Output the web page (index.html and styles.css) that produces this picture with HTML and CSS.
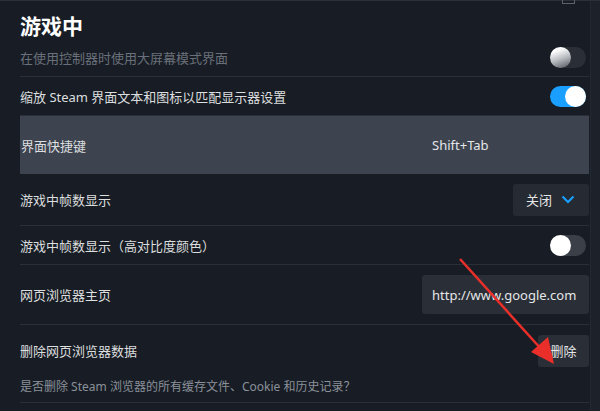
FILE: index.html
```html
<!DOCTYPE html>
<html>
<head>
    <meta charset="UTF-8">
    <title>游戏中</title>
    <link rel="stylesheet" href="styles.css">
</head>
<body>

<div id="frame">
    <div id="panel">
        <h1>游戏中</h1>

        <div class="row">
            <span class="label dim">在使用控制器时使用大屏幕模式界面</span>
            <div class="toggle disabled"><div class="knob"></div></div>
        </div>

        <div class="row">
            <span class="label">缩放 Steam 界面文本和图标以匹配显示器设置</span>
            <div class="toggle on"><div class="knob"></div></div>
        </div>

        <div class="row hotkey">
            <span class="label">界面快捷键</span>
            <div class="value">Shift+Tab</div>
        </div>

        <div class="row select">
            <span class="label">游戏中帧数显示</span>
            <div class="dropdown">
                关闭
                <svg width="14" height="9" viewBox="0 0 14 9"><path d="M1.5 1.5 L7 7 L12.5 1.5" fill="none" stroke="#1a9fff" stroke-width="2.2"/></svg>
            </div>
        </div>

        <div class="row">
            <span class="label">游戏中帧数显示（高对比度颜色）</span>
            <div class="toggle"><div class="knob"></div></div>
        </div>

        <div class="row text">
            <span class="label">网页浏览器主页</span>
            <div class="value input">http://www.google.com</div>
        </div>

        <div class="row block">
            <div class="line">
                <span class="label">删除网页浏览器数据</span>
                <div class="button">删除</div>
            </div>
            <div class="desc">是否删除 Steam 浏览器的所有缓存文件、Cookie 和历史记录？</div>
        </div>
    </div>
    <div id="scrollbar"></div>

    <!-- window controls cut off at the top edge -->
    <div id="winbox"></div>

    <!-- annotation arrow from the screenshot -->
    <svg id="arrow" width="600" height="411" viewBox="0 0 600 411">
        <line x1="460" y1="259" x2="542" y2="350" stroke="#ea2f2a" stroke-width="2.5"/>
        <polygon points="554,364 531,352 548,337" fill="#ea2f2a"/>
    </svg>
</div>

</body>
</html>
```

FILE: styles.css
```css
html {
    box-sizing: border-box;
}
*, *:before, *:after {
    box-sizing: inherit;
}

body{
    margin: 0;
    background-color: #181d25;
    font-family: "Noto Sans", "Noto Sans CJK SC", sans-serif;
    color: #dcdedf;
    overflow: hidden;
}

#frame{
    position: relative;
    width: 600px;
    height: 411px;
    display: flex;
    border-top: 1px solid #2b3039;
}

#panel{
    width: 590px;
    padding: 0 1px 0 20px;
}

#scrollbar{
    width: 10px;
    background-color: #1d222a;
    border-left: 1px solid #232831;
}

#winbox{
    position: absolute;
    left: 562px;
    top: -4px;
    width: 13px;
    height: 7px;
    border: 1px solid #5b616a;
}

h1{
    margin: 13px 0 0 0;
    font-size: 21px;
    line-height: 24px;
    font-weight: bold;
    color: #ffffff;
}

.row{
    display: flex;
    align-items: center;
    justify-content: space-between;
    height: 39px;
    border-bottom: 1px solid #2a2f37;
}

.label{
    font-size: 13px;
    color: #dcdedf;
}

.label.dim{
    color: #6a707a;
}

.row.hotkey{
    height: 58px;
    background-color: #3d4450;
    border-bottom: none;
    padding-left: 1px;
}

.row.select{
    height: 52px;
}

.row.text{
    height: 60px;
}

.value{
    width: 167px;
    height: 39px;
    padding: 0 10px;
    display: flex;
    align-items: center;
    font-size: 13px;
    color: #e4e6e8;
}

.value.input{
    background-color: #2a2e36;
    border-radius: 3px;
}

.dropdown{
    width: 76px;
    height: 32px;
    border-radius: 3px;
    background-color: #262a32;
    display: flex;
    align-items: center;
    justify-content: space-between;
    padding: 0 14px 0 13px;
    font-size: 13px;
    color: #e4e6e8;
}

.toggle{
    width: 36px;
    height: 21px;
    border-radius: 11px;
    background-color: #3a3f48;
    margin-right: 3px;
}

.toggle .knob{
    width: 21px;
    height: 21px;
    border-radius: 50%;
    background-color: #ffffff;
}

.toggle.on{
    background-color: #1a9fff;
}

.toggle.on .knob{
    margin-left: 15px;
}

.toggle.disabled{
    background-color: #2a2f37;
}

.toggle.disabled .knob{
    background: linear-gradient(160deg, #ffffff 20%, #b9bcc1 55%, #4f535a);
}

.row.block{
    display: block;
    height: 78px;
}

.line{
    display: flex;
    align-items: center;
    justify-content: space-between;
    height: 42px;
    padding-top: 9px;
}

.button{
    width: 51px;
    height: 32px;
    border-radius: 3px;
    background-color: #2a2e36;
    display: flex;
    align-items: center;
    justify-content: center;
    font-size: 13px;
    color: #e4e6e8;
}

.desc{
    font-size: 12px;
    color: #8a9099;
    margin-top: 10px;
}

#arrow{
    position: absolute;
    left: 0;
    top: -1px;
}
```
